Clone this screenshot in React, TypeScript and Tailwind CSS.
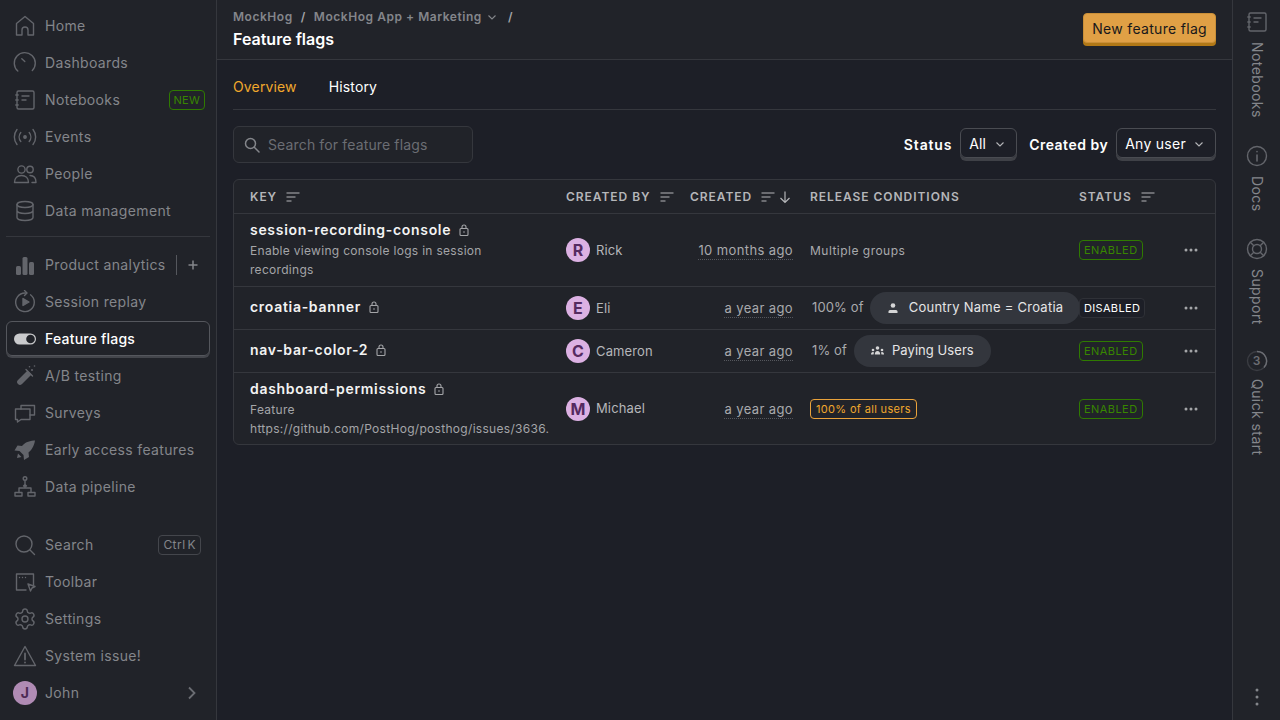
import React from "react";
import { Settings } from "lucide-react";

const S = ({ children, size = 24, className = "text-[#63656b]", sw = 1.4 }: { children: React.ReactNode; size?: number; className?: string; sw?: number }) => (
  <svg width={size} height={size} viewBox="0 0 24 24" fill="none" stroke="currentColor" strokeWidth={sw} strokeLinecap="round" strokeLinejoin="round" className={`shrink-0 ${className}`}>
    {children}
  </svg>
);

const Icons: Record<string, React.ReactNode> = {
  home: <path d="M3.500 21V9.500L12 2.500l8.500 7V21H15v-5a3 3 0 0 0-6 0v5z" />,
  dash: <><path d="M5 20.500A10.500 10.500 0 1 1 19.500 20" transform="translate(-.2 -.5)" /><path d="M8.800 7.800l3 2.800" /></>,
  note: <><rect x="4" y="3" width="17" height="18" rx="1.500" /><path d="M9 8h7M9 12h4" /><path d="M2.800 7h2.400M2.800 12h2.400M2.800 17h2.400" /></>,
  events: <><circle cx="12" cy="12" r="1.200" fill="currentColor" /><path d="M7.800 7.500a7 7 0 0 0 0 9M16.200 7.500a7 7 0 0 1 0 9M4 4.500a12 12 0 0 0 0 15M20 4.500a12 12 0 0 1 0 15" /></>,
  people: <><circle cx="8.500" cy="7.500" r="3.600" /><circle cx="17" cy="7.500" r="3.200" /><path d="M1.500 20.500c0-4.500 3-7 7-7s7 2.500 7 7z" /><path d="M17 13.500c3.600 0 6 2.500 6 7h-4" /></>,
  data: <><ellipse cx="12" cy="5.500" rx="8" ry="3" /><path d="M4 5.500v13c0 1.700 3.600 3 8 3s8-1.300 8-3v-13M4 11.500c0 1.700 3.600 3 8 3s8-1.300 8-3" /></>,
  bars: <g fill="currentColor" stroke="none"><rect x="3" y="13" width="5" height="9" rx="1.500" /><rect x="9.500" y="4" width="5" height="18" rx="1.500" /><rect x="16" y="9" width="5" height="13" rx="1.500" /></g>,
  replay: <><path d="M17.500 4.800A9.300 9.300 0 1 1 12 3h1.500" /><path d="M11.500 .5l2.500 2.500-2.500 2.500" /><path d="M10 8.500l6 3.500-6 3.500z" fill="currentColor" /></>,
  ab: <g><path d="M14.500 6.500l4 4-9.500 9.500a2.800 2.800 0 0 1-4-4z" fill="currentColor" stroke="none" /><path d="M13 5.500l6.500 6.500" /><circle cx="19" cy="6" r="1" fill="currentColor" stroke="none" /><circle cx="16.500" cy="2.800" r=".8" fill="currentColor" stroke="none" /><circle cx="21.500" cy="2" r=".8" fill="currentColor" stroke="none" /></g>,
  surveys: <><path d="M8 8V4.500h13.500V14H17" /><path d="M2.500 8H17v10.500H8L4.500 21v-2.500h-2z" /></>,
  rocket: <path d="M22 2.500c-1 6-3.500 9.500-6.500 12l.5 4.500-5 3-.5-5-4-4-5-.5 3-5 4.500.5c2.500-3 6-5 12-5.500zM5 15.500l3.500 3.500-4.500 1z" fill="currentColor" stroke="none" />,
  pipeline: <><circle cx="12" cy="3.500" r="1.800" /><path d="M12 5.500V12M12 9.500l-1.500 1.500h3zM6 17.500V13h12v4.500" /><rect x="2" y="17.500" width="7" height="3.500" /><rect x="15" y="17.500" width="7" height="3.500" /></>,
  search: <><circle cx="11" cy="11" r="8" /><path d="M17 17l4.500 4.500" /></>,
  toolbar: <><path d="M13 20H3.500V4h17v11" /><path d="M6.500 7.500h.01M9.500 7.500h.01M12.500 7.500h.01" strokeWidth="1.400" /><path d="M15 14l7 2.500-3 1.500-1.500 3z" /></>,
  alert: <><path d="M12 2.500L1.500 21.500h21z" /><path d="M12 9.500v6M12 18.300v.2" strokeWidth="1.800" /></>,
};

const NavRow = ({ icon, label, active, right }: { icon: string; label: string; active?: boolean; right?: React.ReactNode }) => (
  <div className={`flex h-[35px] items-center gap-[8px] rounded-md pr-[5px] text-sm ${active ? "border border-[#55575d] pl-[6px] font-medium tracking-[0.015em] text-white shadow-[0_2px_0_#44464c]" : "pl-[7px] tracking-[0.025em] text-[#84868b]"}`}>
    {active ? (
      <svg width="24" height="24" viewBox="0 0 24 24" className="shrink-0">
        <rect x="1" y="6.500" width="22" height="11" rx="5.500" fill="#c9cacc" />
        <circle cx="17.500" cy="12" r="4.300" fill="#212329" />
      </svg>
    ) : icon === "settings" ? (
      <Settings size={24} strokeWidth={1.4} className="shrink-0 text-[#63656b]" />
    ) : (
      <S>{Icons[icon]}</S>
    )}
    <span className="truncate">{label}</span>
    {right && <div className="ml-auto flex items-center">{right}</div>}
  </div>
);

const Sidebar = () => (
  <aside className="flex h-full w-[217px] shrink-0 flex-col border-r border-[#35373d] bg-[#212329] px-[6px] py-2">
    <div className="flex flex-col gap-[2px]">
      <NavRow icon="home" label="Home" />
      <NavRow icon="dash" label="Dashboards" />
      <NavRow icon="note" label="Notebooks" right={<span className="rounded border border-[#2f7a00] px-[4px] text-[11px] leading-[18px] tracking-[0.02em] text-[#388600]">NEW</span>} />
      <NavRow icon="events" label="Events" />
      <NavRow icon="people" label="People" />
      <NavRow icon="data" label="Data management" />
    </div>
    <div className="mb-[10px] mt-2 h-px bg-[#35373d]" />
    <div className="flex flex-col gap-[2px]">
      <NavRow icon="bars" label="Product analytics" right={<div className="flex items-center"><span className="h-5 w-px bg-[#55575d]" /><svg width="24" height="24" viewBox="0 0 24 24" fill="none" stroke="#84868b" strokeWidth="1.500" className="ml-[4px]"><path d="M12 7.500v9M7.500 12h9" /></svg></div>} />
      <NavRow icon="replay" label="Session replay" />
      <NavRow icon="x" label="Feature flags" active />
      <NavRow icon="ab" label="A/B testing" />
      <NavRow icon="surveys" label="Surveys" />
      <NavRow icon="rocket" label="Early access features" />
      <NavRow icon="pipeline" label="Data pipeline" />
    </div>
    <div className="mt-[23px] flex flex-col gap-[2px]">
      <NavRow icon="search" label="Search" right={<span className="mr-[4px] rounded border border-[#44464c] px-[4px] text-[12px] leading-[18px] tracking-[0.04em] text-[#84868b] [word-spacing:-2px]">Ctrl K</span>} />
      <NavRow icon="toolbar" label="Toolbar" />
      <NavRow icon="settings" label="Settings" />
      <NavRow icon="alert" label="System issue!" />
      <div className="flex h-[35px] items-center gap-2 pl-[7px] pr-[5px] text-sm tracking-[0.025em] text-[#84868b]">
        <span className="flex h-6 w-6 items-center justify-center rounded-full bg-[#b08bb4] text-sm font-bold text-[#4d2a54]">J</span>
        <span>John</span>
        <svg width="24" height="24" viewBox="0 0 24 24" fill="none" stroke="#6b6d73" strokeWidth="1.800" className="ml-auto mr-[1px]"><path d="M9 6.500l5.500 5.500L9 17.500" /></svg>
      </div>
    </div>
  </aside>
);

const Chevron = ({ c = "#b5b6b9" }: { c?: string }) => (
  <svg width="12" height="12" viewBox="0 0 12 12" fill="none" stroke={c} strokeWidth="1.100"><path d="M2.500 4.500L6 8l3.500-3.500" /></svg>
);

const SortIcon = () => (
  <svg width="16" height="16" viewBox="0 0 16 16" fill="none" stroke="#b5b6b9" strokeWidth="1.200"><path d="M1.500 4h13M1.500 8h9M1.500 12h5" /></svg>
);

const Lock = () => (
  <svg width="14" height="14" viewBox="0 0 14 14" fill="none" stroke="#a4a5a8" strokeWidth="1.100"><rect x="3" y="5.500" width="8" height="7" rx="1" /><path d="M5 5.500V4a2 2 0 0 1 4 0v1.500" /><circle cx="7" cy="9" r=".8" fill="#a4a5a8" stroke="none" /></svg>
);

const GRID = "grid grid-cols-[332px_124px_120px_269px_96px_1fr]";

const Avatar = ({ name }: { name: string }) => (
  <div className="flex items-center gap-[6px] text-[13px] tracking-[0.01em] text-[#b5b6b9]">
    <span className="flex h-6 w-6 items-center justify-center rounded-full bg-[#dcb1e3] text-base font-bold text-[#552a60]">{name[0]}</span>
    <span className="pt-[1px]">{name}</span>
  </div>
);

const When = ({ t }: { t: string }) => (
  <div className="pr-[17px] pt-[2px] text-right text-[13px] tracking-[0.03em]"><span className="border-b border-dotted border-[#55575d] pb-px text-[#a9aaad]">{t}</span></div>
);

const Status = ({ on = true }: { on?: boolean }) =>
  on ? (
    <span className="inline-flex h-5 items-center rounded border border-[#2f7a00] px-[4px] text-[11px] tracking-[0.04em] text-[#388600]">ENABLED</span>
  ) : (
    <span className="inline-flex h-5 items-center rounded border border-[#2f3137] bg-[#1d1f27] px-[4px] text-[11px] tracking-[0.03em] text-white">DISABLED</span>
  );

const More = () => (
  <div className="flex items-center pl-[9px]">
    <svg width="14" height="6" viewBox="0 0 14 6" fill="#a4a5a8"><circle cx="2" cy="3" r="1.500" /><circle cx="7" cy="3" r="1.500" /><circle cx="12" cy="3" r="1.500" /></svg>
  </div>
);

const Pill = ({ icon, label, gap, track }: { icon: React.ReactNode; label: string; gap: string; track: string }) => (
  <span className={`flex h-8 items-center whitespace-nowrap rounded-2xl bg-[#33363d] pl-[17px] pr-[17px] text-[13px] text-[#e5e5e6] ${gap} ${track}`}>
    {icon}
    {label}
  </span>
);

const Key = ({ k, desc, shift = "" }: { k: string; desc?: React.ReactNode; shift?: string }) => (
  <div className={`pl-4 ${shift}`}>
    <div className="flex items-center gap-[6px] text-sm font-semibold tracking-[0.05em] text-[#f3f3f3]">
      {k} <Lock />
    </div>
    {desc && <div className="mt-[1px] pb-[2px] text-xs leading-[19px] tracking-[0.025em] text-[#a4a5a8]">{desc}</div>}
  </div>
);

const Row = ({ h, border = true, children }: { h: string; border?: boolean; children: React.ReactNode }) => (
  <div className={`${GRID} ${h} items-center ${border ? "border-b border-[#35373d]" : ""}`}>{children}</div>
);

const Th = ({ label, extra }: { label: string; extra?: React.ReactNode }) => (
  <div className="flex items-center gap-[8px] text-xs font-semibold tracking-[0.08em] text-[#b5b6b9]">
    {label}
    {extra}
  </div>
);

const Table = () => (
  <div className="mt-4 overflow-hidden rounded-md border border-[#35373d] bg-[#212329]">
    <div className={`${GRID} h-[34px] items-center border-b border-[#35373d]`}>
      <div className="pl-4"><Th label="KEY" extra={<SortIcon />} /></div>
      <Th label="CREATED BY" extra={<SortIcon />} />
      <div className="pr-[17px]">
        <Th label="CREATED" extra={
          <span className="flex items-center gap-[2px]"><SortIcon /><svg width="14" height="14" viewBox="0 0 14 14" fill="none" stroke="#b5b6b9" strokeWidth="1.200"><path d="M7 1.500v11M2.500 8L7 12.500 11.500 8" /></svg></span>
        } />
      </div>
      <Th label="RELEASE CONDITIONS" />
      <Th label="STATUS" extra={<SortIcon />} />
      <div />
    </div>
    <Row h="h-[73px]">
      <Key k="session-recording-console" desc={<>Enable viewing console logs in session<br />recordings</>} />
      <Avatar name="Rick" />
      <When t="10 months ago" />
      <div className="pt-[1px] text-xs tracking-[0.04em] text-[#a9aaad]">Multiple groups</div>
      <div className="flex"><Status /></div>
      <More />
    </Row>
    <Row h="h-[43px]">
      <Key k="croatia-banner" shift="pb-[2px]" />
      <Avatar name="Eli" />
      <When t="a year ago" />
      <div className="flex items-center gap-[6px] whitespace-nowrap pl-[2px] text-[13px] tracking-[0.01em] text-[#a9aaad]">
        100% of
        <Pill label="Country Name = Croatia" gap="gap-[10px]" track="tracking-[0.02em]" icon={<svg width="12" height="12" viewBox="0 0 12 12" fill="#d5d5d6"><circle cx="6" cy="3.500" r="2.300" /><path d="M1.500 11V9.500c0-1 1-1.500 2-1.500h5c1 0 2 .5 2 1.500V11z" /></svg>} />
      </div>
      <div className="relative z-10 flex"><Status on={false} /></div>
      <More />
    </Row>
    <Row h="h-[43px]">
      <Key k="nav-bar-color-2" shift="pb-[2px]" />
      <Avatar name="Cameron" />
      <When t="a year ago" />
      <div className="flex items-center gap-[7px] whitespace-nowrap pl-[2px] text-[13px] tracking-[0.01em] text-[#a9aaad]">
        1% of
        <Pill label="Paying Users" gap="gap-[8px]" track="tracking-[0.005em]" icon={<svg width="13" height="12" viewBox="0 0 13 12" fill="#d5d5d6"><circle cx="6.500" cy="3" r="1.800" /><circle cx="2" cy="5" r="1.300" /><circle cx="11" cy="5" r="1.300" /><path d="M3.800 9.500c0-2 1-3.500 2.700-3.500s2.700 1.500 2.700 3.500zM0 9.500c0-1.500.7-2.500 2-2.500l1 .5-.5 2zM13 9.500c0-1.500-.7-2.500-2-2.500l-1 .5.5 2z" /></svg>} />
      </div>
      <div className="flex"><Status /></div>
      <More />
    </Row>
    <Row h="h-[71px]" border={false}>
      <Key k="dashboard-permissions" shift="pt-[2px]" desc={<>Feature<br />https://github.com/PostHog/posthog/issues/3636.</>} />
      <Avatar name="Michael" />
      <When t="a year ago" />
      <div className="flex pt-[1px]"><span className="inline-flex h-5 items-center rounded border border-[#e9a23b] px-[5px] text-[11px] tracking-[0.03em] text-[#f1a82c]">100% of all users</span></div>
      <div className="flex pt-[1px]"><Status /></div>
      <More />
    </Row>
  </div>
);

const Main = () => (
  <main className="flex h-full min-w-0 flex-1 flex-col bg-[#1d1f27]">
    <header className="flex h-[60px] shrink-0 items-center justify-between border-b border-[#35373d] bg-[#212329] px-4">
      <div>
        <div className="flex items-center pt-[1px] text-xs font-semibold leading-4 tracking-[0.045em] text-[#84868b]">
          <span>MockHog</span>
          <span className="mx-[8px] text-[#a4a5a8]">/</span>
          <span>MockHog App + Marketing</span>
          <span className="ml-[4px]"><Chevron c="#84868b" /></span>
          <span className="ml-[10px] text-[#a4a5a8]">/</span>
        </div>
        <div className="mt-[2px] text-base font-semibold leading-6 text-white">Feature flags</div>
      </div>
      <button className="mb-[3px] flex h-[30px] items-center rounded border border-[#c98f38] bg-[#e0a045] px-[8px] pt-[2px] text-sm tracking-[0.022em] text-[#18181b] shadow-[0_3px_0_#b17816]">New feature flag</button>
    </header>
    <div className="flex flex-1 flex-col px-4">
      <div className="flex h-[50px] shrink-0 items-center gap-8 border-b border-[#35373d] pt-[4px] text-sm tracking-[0.01em]">
        <span className="text-[#f1a82c]">Overview</span>
        <span className="text-white">History</span>
      </div>
      <div className="mt-4 flex h-[37px] items-center justify-between">
        <div className="flex h-[37px] w-[240px] items-center gap-[7px] rounded-md border border-[#35373d] bg-[#212329] px-[9px] text-sm tracking-[0.01em] text-[#6b6d73]">
          <svg width="18" height="18" viewBox="0 0 18 18" fill="none" stroke="#84868b" strokeWidth="1.500" strokeLinecap="round"><circle cx="7.500" cy="7.500" r="5" /><path d="M11.500 11.500l4.500 4.500" /></svg>
          Search for feature flags
        </div>
        <div className="flex items-center text-sm">
          <span className="mr-2 font-semibold tracking-[0.06em] text-white">Status</span>
          <span className="mb-1 flex h-[30px] items-center gap-[8px] rounded-md border border-[#4a4c52] pl-2 pr-[10px] pt-[2px] tracking-[0.01em] text-white shadow-[0_3px_0_#3f4147]">All <Chevron /></span>
          <span className="ml-3 mr-2 font-semibold tracking-[0.035em] text-white">Created by</span>
          <span className="mb-1 flex h-[30px] items-center gap-[7px] rounded-md border border-[#4a4c52] pl-2 pr-[10px] pt-[2px] tracking-[0.02em] text-white shadow-[0_3px_0_#3f4147]">Any user <Chevron /></span>
        </div>
      </div>
      <Table />
    </div>
  </main>
);

const SideItem = ({ icon, label, className = "gap-2" }: { icon: React.ReactNode; label: string; className?: string }) => (
  <div className={`flex flex-col items-center ${className}`}>
    {icon}
    <span className="text-sm leading-5 tracking-[0.03em] text-[#84868b] [writing-mode:vertical-rl]">{label}</span>
  </div>
);

const RightBar = () => (
  <aside className="flex h-full w-[48px] shrink-0 flex-col items-center justify-between border-l border-[#35373d] bg-[#212329] pb-[14px] pt-[10px]">
    <div className="flex flex-col items-center gap-[26px]">
      <SideItem label="Notebooks" icon={<S>{Icons.note}</S>} />
      <SideItem label="Docs" icon={<S><circle cx="12" cy="12" r="9.500" /><path d="M12 11v6M12 7.500v.2" strokeWidth="1.600" /></S>} />
      <SideItem label="Support" icon={<S><circle cx="12" cy="12" r="9.500" /><circle cx="12" cy="12" r="4.500" /><path d="M5.300 5.300l3.500 3.500M18.700 5.300l-3.500 3.500M5.300 18.700l3.500-3.500M18.700 18.700l-3.500-3.500" /></S>} />
      <SideItem label="Quick start" className="-mt-[2px] gap-[6px]" icon={
        <div className="relative flex h-6 w-6 items-center justify-center text-xs font-semibold text-[#6b6d73]">
          <svg width="24" height="24" viewBox="0 0 24 24" fill="none" className="absolute inset-0" strokeWidth="1.400"><circle cx="12" cy="12" r="9.500" stroke="#3a3c42" /><path d="M12 2.500a9.500 9.500 0 0 1 7 16" stroke="#6b6d73" /></svg>
          3
        </div>
      } />
    </div>
    <svg width="4" height="18" viewBox="0 0 4 18" fill="#84868b"><circle cx="2" cy="2" r="1.500" /><circle cx="2" cy="9" r="1.500" /><circle cx="2" cy="16" r="1.500" /></svg>
  </aside>
);

export default function App() {
  return (
    <div className="flex h-[720px] w-[1280px] overflow-hidden bg-[#1d1f27] font-['Inter',sans-serif]">
      <Sidebar />
      <Main />
      <RightBar />
    </div>
  );
}
